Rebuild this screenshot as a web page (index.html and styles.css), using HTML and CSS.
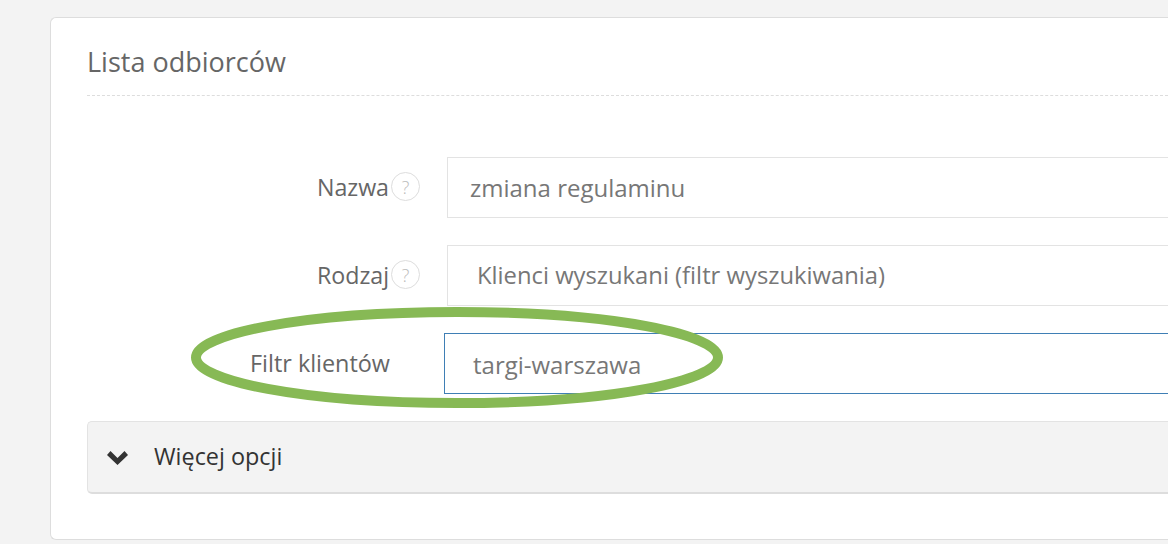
FILE: index.html
```html
<!DOCTYPE html>
<html lang="pl">
<head>
<meta charset="utf-8">
<title>Lista odbiorców</title>
<link rel="stylesheet" href="styles.css">
</head>
<body>
<main class="card">
  <h2 class="title">Lista odbiorców</h2>
  <form class="form">
    <div class="row">
      <div class="label"><span>Nazwa</span><span class="help">?</span></div>
      <div class="field field-name">zmiana regulaminu</div>
    </div>
    <div class="row">
      <div class="label"><span>Rodzaj</span><span class="help">?</span></div>
      <div class="field field-select">Klienci wyszukani (filtr wyszukiwania)</div>
    </div>
    <div class="row row-filter">
      <div class="label label-filter"><span>Filtr klientów</span></div>
      <div class="field field-focus">targi-warszawa</div>
    </div>
  </form>
  <div class="more">
    <svg class="chevron" viewBox="0 0 23 18" aria-hidden="true"><polygon points="1,6 4.5,2 11.5,9 18.5,2 22,6 11.5,16" fill="#333"/></svg>
    <span>Więcej opcji</span>
  </div>
</main>
<svg class="oval" viewBox="0 0 540 110" aria-hidden="true"><path d="M5 50.5 C5 27.5 109.4 5 266 5 C422.6 5 527 27.5 527 50.5 C527 73.5 422.6 96 266 96 C109.4 96 5 73.5 5 50.5 Z" fill="none" stroke="#87b955" stroke-width="10"/></svg>
</body>
</html>
```
FILE: styles.css
```css
html, body {
  margin: 0;
  height: 544px;
  overflow: hidden;
  background: #f3f3f3;
  font-family: "Open Sans", sans-serif;
  color: #666;
}
body {
  padding: 17px 0 0 50px;
  box-sizing: border-box;
  position: relative;
  width: 1168px;
}
.card {
  height: 523px;
  box-sizing: border-box;
  background: #fff;
  border: 1px solid #ddd;
  border-right: 0;
  border-radius: 6px 0 0 6px;
  padding: 0 0 0 36px;
}
.title {
  margin: 0;
  height: 78px;
  box-sizing: border-box;
  padding: 26px 0 0 0;
  font-size: 27px;
  line-height: 36px;
  font-weight: 400;
  color: #666;
  border-bottom: 1px dashed #ddd;
}
.form {
  display: flex;
  flex-direction: column;
  gap: 27px;
  padding-top: 61px;
}
.row {
  display: flex;
  height: 61px;
}
.label {
  width: 360px;
  padding-right: 27px;
  box-sizing: border-box;
  display: flex;
  justify-content: flex-end;
  align-items: center;
  gap: 2px;
  font-size: 23.2px;
  padding-bottom: 2px;
}
.label-filter {
  font-size: 23.4px;
  padding-right: 57px;
  padding-bottom: 0;
  margin-top: -2px;
}
.help {
  width: 29px;
  height: 29px;
  box-sizing: border-box;
  border: 1px solid #ddd;
  border-radius: 50%;
  display: flex;
  align-items: center;
  justify-content: center;
  font-size: 18px;
  font-weight: 300;
  color: #bbb;
}
.field {
  flex: 1;
  box-sizing: border-box;
  border: 1px solid #e3e3e3;
  border-right: 0;
  font-size: 24px;
  line-height: 59px;
  color: #777;
  padding-left: 22px;
}
.field-select {
  font-size: 23.8px;
  padding-left: 29px;
}
.field-focus {
  border: 1px solid #3f7fb5;
  border-right: 0;
  margin-left: -3px;
  padding-left: 28px;
  line-height: 62px;
}
.row-filter { margin-bottom: 27px; }
.more {
  height: 73px;
  box-sizing: border-box;
  background: #f3f3f3;
  border: 1px solid #e3e3e3;
  border-right: 0;
  border-bottom: 2px solid #ddd;
  border-radius: 5px 0 0 5px;
  display: flex;
  align-items: center;
  font-size: 23.4px;
  color: #333;
  padding: 0 0 2px 18px;
}
.chevron {
  width: 23px;
  height: 18px;
  margin: 3px 25px 0 0;
}
.oval {
  position: absolute;
  left: 191px;
  top: 307px;
  width: 540px;
  height: 110px;
}
```
